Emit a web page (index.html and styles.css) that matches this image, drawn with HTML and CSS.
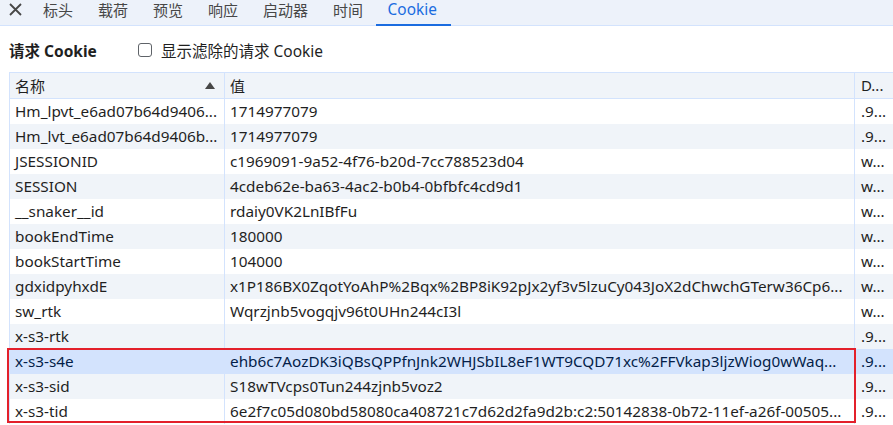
FILE: index.html
```html
<!DOCTYPE html>
<html lang="zh-CN">
<head>
<meta charset="utf-8">
<link rel="stylesheet" href="styles.css">
</head>
<body>
<div class="tabbar">
  <span class="close"><svg width="13" height="13" viewBox="0 0 13 13"><path d="M1 1L12 12M12 1L1 12" stroke="#474747" stroke-width="1.8" fill="none"/></svg></span>
  <span class="tab">标头</span>
  <span class="tab">载荷</span>
  <span class="tab">预览</span>
  <span class="tab">响应</span>
  <span class="tab">启动器</span>
  <span class="tab">时间</span>
  <span class="tab active">Cookie</span>
</div>
<div class="section">
  <span class="title">请求 Cookie</span>
  <label class="filter"><span class="checkbox"></span>显示滤除的请求 Cookie</label>
</div>
<div class="tablewrap">
  <div class="grid">
    <div class="row head"><div class="c1">名称<span class="sort"></span></div><div class="c2">值</div><div class="c3">D...</div></div>
    <div class="row"><div class="c1">Hm_lpvt_e6ad07b64d9406...</div><div class="c2">1714977079</div><div class="c3">.9...</div></div>
    <div class="row alt"><div class="c1">Hm_lvt_e6ad07b64d9406b...</div><div class="c2">1714977079</div><div class="c3">.9...</div></div>
    <div class="row"><div class="c1">JSESSIONID</div><div class="c2">c1969091-9a52-4f76-b20d-7cc788523d04</div><div class="c3">w...</div></div>
    <div class="row alt"><div class="c1">SESSION</div><div class="c2">4cdeb62e-ba63-4ac2-b0b4-0bfbfc4cd9d1</div><div class="c3">w...</div></div>
    <div class="row"><div class="c1">__snaker__id</div><div class="c2">rdaiy0VK2LnIBfFu</div><div class="c3">w...</div></div>
    <div class="row alt"><div class="c1">bookEndTime</div><div class="c2">180000</div><div class="c3">w...</div></div>
    <div class="row"><div class="c1">bookStartTime</div><div class="c2">104000</div><div class="c3">w...</div></div>
    <div class="row alt"><div class="c1">gdxidpyhxdE</div><div class="c2">x1P186BX0ZqotYoAhP%2Bqx%2BP8iK92pJx2yf3v5lzuCy043JoX2dChwchGTerw36Cp6...</div><div class="c3">w...</div></div>
    <div class="row"><div class="c1">sw_rtk</div><div class="c2">Wqrzjnb5vogqjv96t0UHn244cI3l</div><div class="c3">w...</div></div>
    <div class="row alt"><div class="c1">x-s3-rtk</div><div class="c2"></div><div class="c3">.9...</div></div>
    <div class="row selected"><div class="c1">x-s3-s4e</div><div class="c2">ehb6c7AozDK3iQBsQPPfnJnk2WHJSbIL8eF1WT9CQD71xc%2FFVkap3ljzWiog0wWaq...</div><div class="c3">.9...</div></div>
    <div class="row alt"><div class="c1">x-s3-sid</div><div class="c2">S18wTVcps0Tun244zjnb5voz2</div><div class="c3">.9...</div></div>
    <div class="row"><div class="c1">x-s3-tid</div><div class="c2">6e2f7c05d080bd58080ca408721c7d62d2fa9d2b:c2:50142838-0b72-11ef-a26f-00505...</div><div class="c3">.9...</div></div>
  </div>
  <div class="highlight"></div>
</div>
</body>
</html>
```
FILE: styles.css
```css
html, body {
  margin: 0;
  padding: 0;
  background: #ffffff;
  overflow: hidden;
}
body {
  font-family: "Noto Sans", "Noto Sans CJK SC", sans-serif;
  font-size: 15px;
  color: #1f1f1f;
  width: 893px;
  height: 425px;
}
.tabbar {
  height: 26px;
  box-sizing: border-box;
  background: #edf2fa;
  border-bottom: 1px solid #d3e3fd;
  display: flex;
  align-items: stretch;
  padding-left: 9px;
}
.close {
  width: 21.5px;
  display: flex;
  align-items: flex-start;
  padding-top: 3px;
}
.tab {
  padding: 0 12.5px;
  color: #474747;
  line-height: 19px;
  white-space: nowrap;
  font-family: "Noto Sans CJK SC", sans-serif;
}
.tab.active {
  color: #1a6ce0;
  font-family: "Noto Sans", "Noto Sans CJK SC", sans-serif;
  font-size: 15.4px;
  border-bottom: 2px solid #1a6ce0;
  margin-bottom: -1px;
  padding: 0 14px 0 12px;
}
.section {
  height: 46px;
  display: flex;
  align-items: center;
  padding-left: 9px;
  padding-top: 2px;
  box-sizing: border-box;
  font-size: 15.5px;
}
.title {
  font-weight: bold;
  width: 129px;
}
.filter {
  display: flex;
  align-items: center;
  color: #1f1f1f;
}
.checkbox {
  width: 14px;
  height: 14px;
  box-sizing: border-box;
  border: 1.5px solid #5f6368;
  border-radius: 3px;
  margin-right: 9px;
}
.tablewrap {
  position: relative;
  margin-left: 9px;
}
.grid {
  border-top: 1px solid #d3e3fd;
  border-left: 1px solid #d3e3fd;
}
.row {
  display: grid;
  grid-template-columns: 215px 630px 60px;
  height: 25px;
  line-height: 25px;
  font-size: 15.3px;
}
.row > div {
  padding: 0 2px 0 5px;
  white-space: nowrap;
  overflow: hidden;
}
.row .c1, .row .c2 {
  border-right: 1px solid #d3e3fd;
}
.row .c3 {
  padding-left: 6px;
}
.row.head {
  background: #f0f4f9;
  border-bottom: 1px solid #d3e3fd;
  font-family: "Noto Sans CJK SC", sans-serif;
  font-size: 15px;
}
.row.head .c1 {
  display: flex;
  justify-content: space-between;
  align-items: center;
  padding-right: 5px;
}
.sort {
  width: 0;
  height: 0;
  border-left: 5px solid transparent;
  border-right: 5px solid transparent;
  border-bottom: 7px solid #474747;
  margin-right: 4px;
}
.row.head .c3 {
  font-family: "Noto Sans", sans-serif;
}
.row.alt {
  background: #f0f4f9;
}
.row.selected {
  background: #d3e3fd;
  color: #041e49;
}
.highlight {
  position: absolute;
  left: -2px;
  top: 276px;
  width: 849px;
  height: 75px;
  box-sizing: border-box;
  border: 2px solid #e3202b;
  pointer-events: none;
}
```
